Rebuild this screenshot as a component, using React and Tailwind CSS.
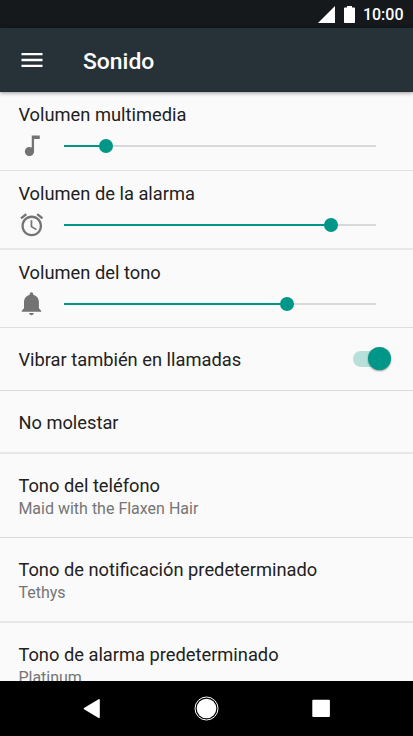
const SLIDERS = [
  {
    label: "Volumen multimedia",
    value: 13.5,
    row: "h-[79px] border-b border-[#e0e0e0]",
    icon: "M12 3v10.55c-.59-.34-1.27-.55-2-.55-2.21 0-4 1.79-4 4s1.79 4 4 4 4-1.79 4-4V6h5V3h-7z",
  },
  {
    label: "Volumen de la alarma",
    value: 85.7,
    row: "h-[79px] border-b-2 border-[#e8e8e8]",
    icon: "M22 5.72l-4.6-3.86-1.29 1.53 4.6 3.86L22 5.72zM7.88 3.39L6.6 1.86 2 5.71l1.29 1.53 4.59-3.85zM12.5 8H11v6l4.75 2.85.75-1.23-4-2.37V8zM12 4c-4.97 0-9 4.03-9 9s4.02 9 9 9c4.97 0 9-4.03 9-9s-4.03-9-9-9zm0 16c-3.87 0-7-3.13-7-7s3.13-7 7-7 7 3.13 7 7-3.13 7-7 7z",
  },
  {
    label: "Volumen del tono",
    value: 71.6,
    row: "h-[78px] border-b border-[#dedede]",
    icon: "M11.75 22c1.1 0 2-.9 2-2h-4c0 1.1.9 2 2 2zm6.5-6v-5.5c0-3.07-2.13-5.64-5-6.32V3.5c0-.83-.67-1.5-1.5-1.5s-1.5.67-1.5 1.5v.68c-2.87.68-5 3.25-5 6.32V16l-2 2v1h17v-1l-2-2z",
  },
];

const TONES = [
  { label: "Tono del teléfono", value: "Maid with the Flaxen Hair", row: "h-[84px] border-b border-[#dedede]" },
  { label: "Tono de notificación predeterminado", value: "Tethys", row: "h-[85px] border-b-2 border-[#e8e8e8]" },
  { label: "Tono de alarma predeterminado", value: "Platinum", row: "h-[84px]" },
];

function StatusBar() {
  return (
    <div className="flex h-[28px] shrink-0 items-center justify-end bg-[#15191c] pr-[9.5px] text-white">
      <svg className="mr-[9px] h-[17px] w-[17px]" viewBox="0 0 17 17" fill="currentColor">
        <path d="M17 0v17H0z" />
      </svg>
      <svg className="mr-[8px] h-[17px] w-[11px]" viewBox="0 0 11 17" fill="currentColor">
        <path d="M3 0h5v1.5h2.2c.5 0 .8.3.8.8v13.9c0 .5-.3.8-.8.8H.8c-.5 0-.8-.3-.8-.8V2.3c0-.5.3-.8.8-.8H3z" />
      </svg>
      <span className="pt-[2px] text-[16px] leading-[28px] font-medium">10:00</span>
    </div>
  );
}

function AppBar() {
  return (
    <div className="z-10 flex h-[64px] shrink-0 items-center bg-[#273238] pl-[18px] text-white shadow-[0_1px_4px_rgba(0,0,0,0.4)]">
      <svg className="h-[28px] w-[28px]" viewBox="0 0 24 24" fill="currentColor">
        <path d="M3 18h18v-2H3v2zm0-5h18v-2H3v2zm0-7v2h18V6H3z" />
      </svg>
      <h1 className="ml-[37px] pt-[3px] text-[22.9px] leading-[28px] font-medium">Sonido</h1>
    </div>
  );
}

function Slider({ label, value, row, icon }) {
  return (
    <div className={`shrink-0 px-[18.4px] pt-[11px] ${row}`}>
      <div className="text-[18.3px] leading-[24px]">{label}</div>
      <div className="mt-[5px] flex h-[28px] items-center">
        <svg className="h-[27.5px] w-[27.5px]" viewBox="0 0 24 24" fill="#737373">
          <path d={icon} />
        </svg>
        <div className="relative ml-[18px] h-[2px] w-[312px] bg-[#d8d8d8]">
          <div className="h-full bg-[#009688]" style={{ width: `${value}%` }} />
          <div
            className="absolute -top-[6px] -ml-[7px] h-[14px] w-[14px] rounded-full bg-[#009688]"
            style={{ left: `${value}%` }}
          />
        </div>
      </div>
    </div>
  );
}

function Switch() {
  return (
    <div className="relative mr-[8px] h-[16px] w-[34px] rounded-full bg-[#b8e0db]">
      <div className="absolute -top-[4px] -right-[4px] h-[23px] w-[23px] rounded-full bg-[#009688] shadow-[0_1px_2px_rgba(0,0,0,0.4)]" />
    </div>
  );
}

function NavBar() {
  return (
    <div className="h-[55px] shrink-0 bg-black">
      <svg className="h-[55px] w-[413px]" viewBox="0 0 413 55" fill="#fff">
        <path d="M98.6 18.2c.7-.4 1.2 0 1.2.7v17.4c0 .7-.5 1.1-1.2.7L84 28.2c-.5-.3-.5-.8 0-1.100z" />
        <circle cx="206.5" cy="27.5" r="9.8" />
        <circle cx="206.5" cy="27.5" r="11.5" fill="none" stroke="#fff" strokeWidth="1" />
        <rect x="312.3" y="18.7" width="17.6" height="17.4" rx="1" />
      </svg>
    </div>
  );
}

export default function App() {
  return (
    <div className="flex h-[736px] w-[413px] flex-col overflow-hidden bg-[#fafafa] font-[Roboto,sans-serif] text-[#212121]">
      <StatusBar />
      <AppBar />
      <div className="flex min-h-0 flex-1 flex-col overflow-hidden">
        {SLIDERS.map((s) => (
          <Slider key={s.label} {...s} />
        ))}
        <div className="flex h-[63px] shrink-0 items-center justify-between border-b border-[#dedede] px-[18.4px] text-[18.3px]">
          <span className="pt-[2px]">Vibrar también en llamadas</span>
          <Switch />
        </div>
        <div className="flex h-[63px] shrink-0 items-center border-b-2 border-[#e8e8e8] px-[18.4px] text-[18.3px]">
          <span className="pt-[2px]">No molestar</span>
        </div>
        {TONES.map((t) => (
          <div key={t.label} className={`shrink-0 px-[18.4px] pt-[20px] ${t.row}`}>
            <div className="text-[18.3px] leading-[24px]">{t.label}</div>
            <div className="text-[16px] leading-[22px] text-[#757575]">{t.value}</div>
          </div>
        ))}
      </div>
      <NavBar />
    </div>
  );
}
